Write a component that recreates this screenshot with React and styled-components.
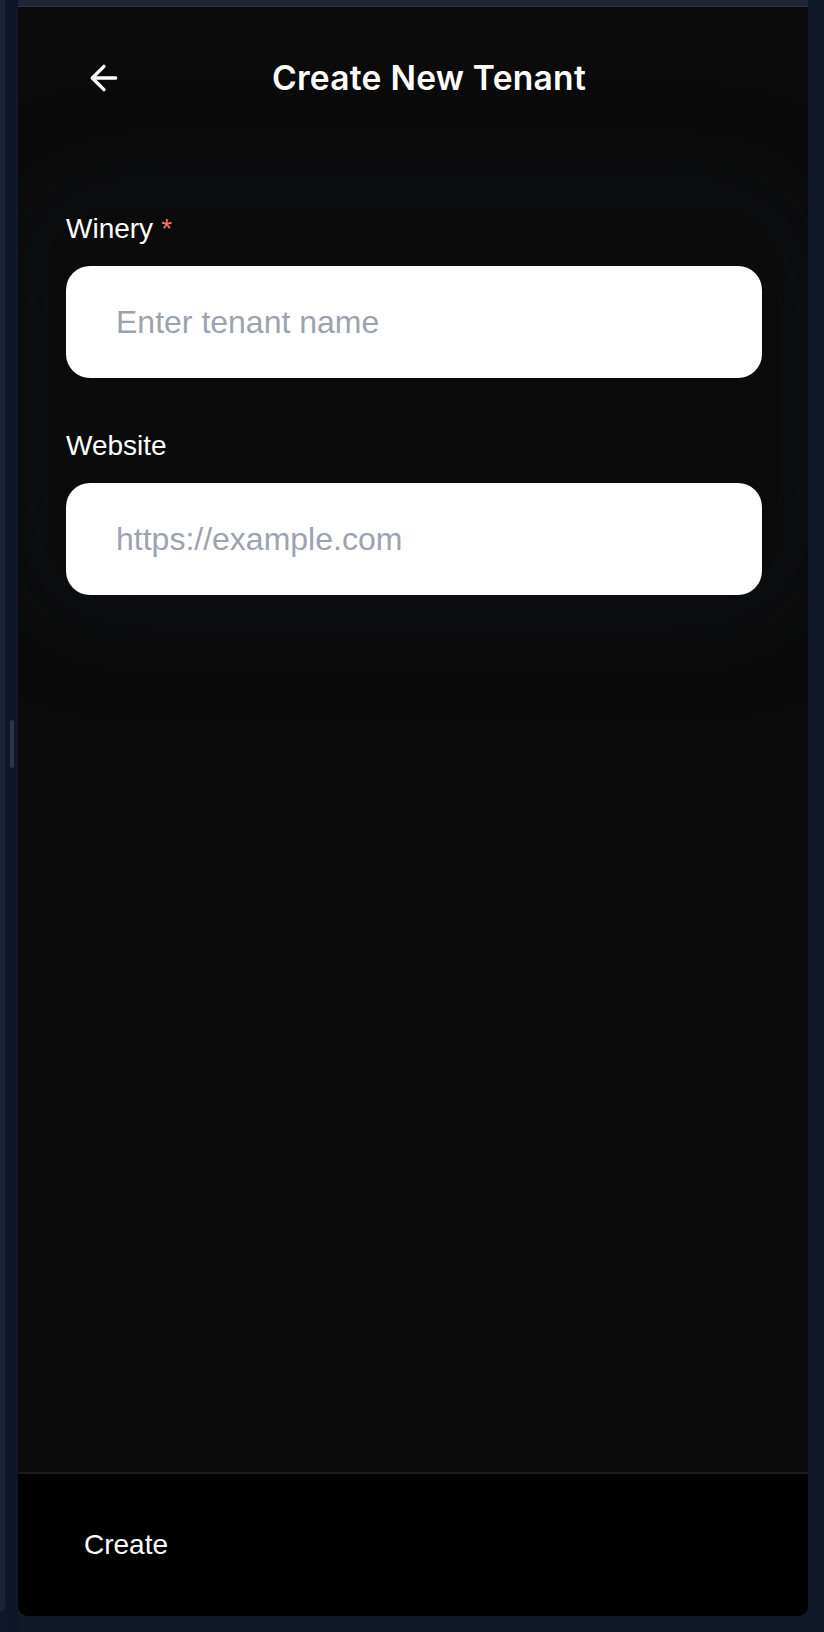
import React from "react";
import styled, { createGlobalStyle } from "styled-components";
import { ArrowLeft } from "lucide-react";

const Global = createGlobalStyle`
  html, body { margin: 0; padding: 0; background: #111827; }
  body { font-family: "Liberation Sans", Arial, sans-serif; }
  * { box-sizing: border-box; }
`;

const Page = styled.div`
  display: flex;
  width: 824px;
  height: 1632px;
  background: #111827;
`;

const SideEdge = styled.div`
  width: 5px;
  height: 1612px;
  background: #1c2333;
  border-radius: 0 0 6px 0;
`;

const Gutter = styled.div`
  width: 13px;
  height: 1632px;
  background: #0f172a;
  padding: 720px 0 0 5px;
`;

const Thumb = styled.div`
  width: 4px;
  height: 48px;
  border-radius: 2px;
  background: #2c3446;
`;

const Column = styled.div`
  width: 790px;
  display: flex;
  flex-direction: column;
`;

const TopBand = styled.div`
  height: 7px;
  background: #1e2537;
  border-bottom: 1px solid #2d3447;
`;

const Panel = styled.div`
  height: 1609px;
  background: #0b0b0b;
  border-radius: 0 0 10px 10px;
  display: flex;
  flex-direction: column;
  overflow: hidden;
`;

const Header = styled.div`
  display: flex;
  align-items: center;
  padding: 51px 0 0 48px;
`;

const BackButton = styled.button`
  width: 40px;
  height: 40px;
  margin-left: 18px;
  padding: 0;
  border: none;
  background: transparent;
  color: #ffffff;
  display: flex;
  align-items: center;
  justify-content: center;
  cursor: pointer;
`;

const Title = styled.h1`
  margin: 0 0 0 148px;
  font-family: Inter, "Noto Sans", sans-serif;
  font-size: 33.6px;
  line-height: 40px;
  font-weight: 600;
  color: #ffffff;
  letter-spacing: 0.25px;
`;

const Form = styled.div`
  margin: 111px 28px 0 30px;
  padding: 0 18px;
  display: flex;
  flex-direction: column;
  gap: 48px;
  box-shadow: 0 0 100px 20px rgba(18, 22, 32, 0.35);
  border-radius: 60px;
`;

const Field = styled.div`
  display: flex;
  flex-direction: column;
`;

const Label = styled.label`
  font-size: 28px;
  line-height: 40px;
  color: #ffffff;
  margin-bottom: 17px;
`;

const Required = styled.span`
  color: #f87171;
  margin-left: 8px;
`;

const Input = styled.input`
  width: 100%;
  height: 112px;
  border: none;
  outline: none;
  border-radius: 24px;
  background: #ffffff;
  padding: 0 50px;
  font-family: "Liberation Sans", Arial, sans-serif;
  font-size: 32px;
  color: #111827;
  &::placeholder { color: #9ca3af; }
`;

const Spacer = styled.div`
  flex: 1;
`;

const Footer = styled.div`
  height: 144px;
  background: #000000;
  border-top: 2px solid #1c1c1c;
  display: flex;
  align-items: center;
  padding-left: 48px;
`;

const CreateButton = styled.button`
  border: none;
  background: transparent;
  color: #ffffff;
  font-family: "Liberation Sans", Arial, sans-serif;
  font-size: 28px;
  line-height: 40px;
  padding: 0 18px;
  cursor: pointer;
`;

export default function App() {
  return (
    <>
      <Global />
      <Page>
        <SideEdge />
        <Gutter>
          <Thumb />
        </Gutter>
        <Column>
          <TopBand />
          <Panel>
            <Header>
              <BackButton aria-label="Back">
                <ArrowLeft size={40} strokeWidth={2} />
              </BackButton>
              <Title>Create New Tenant</Title>
            </Header>
            <Form>
              <Field>
                <Label>
                  Winery<Required>*</Required>
                </Label>
                <Input placeholder="Enter tenant name" />
              </Field>
              <Field>
                <Label>Website</Label>
                <Input placeholder="https://example.com" />
              </Field>
            </Form>
            <Spacer />
            <Footer>
              <CreateButton>Create</CreateButton>
            </Footer>
          </Panel>
        </Column>
      </Page>
    </>
  );
}
